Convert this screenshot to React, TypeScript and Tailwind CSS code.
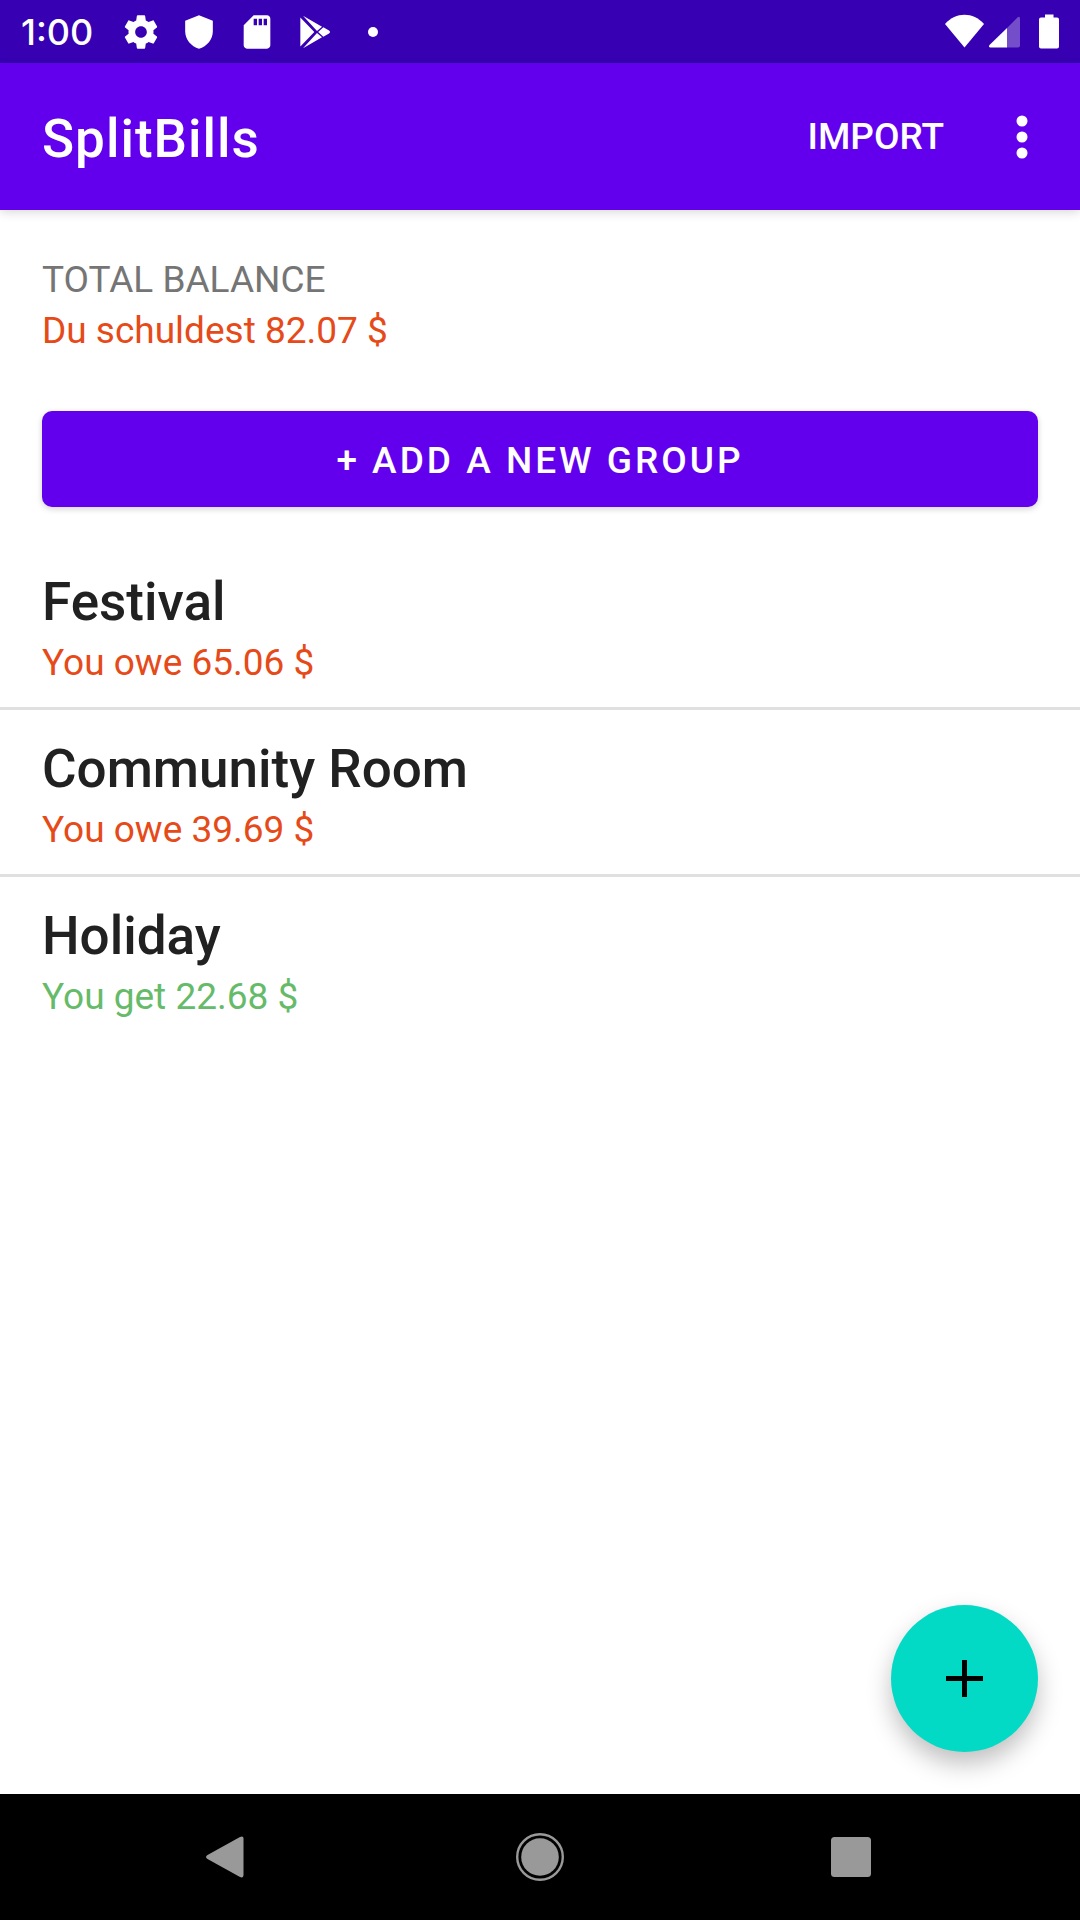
import type { ReactNode } from "react";

type Group = { name: string; balance: string; owed: boolean };

const groups: Group[] = [
  { name: "Festival", balance: "You owe 65.06 $", owed: true },
  { name: "Community Room", balance: "You owe 39.69 $", owed: true },
  { name: "Holiday", balance: "You get 22.68 $", owed: false },
];

function StatusIcon({ children }: { children: ReactNode }) {
  return (
    <svg viewBox="0 0 24 24" className="size-10 fill-white" aria-hidden="true">
      {children}
    </svg>
  );
}

function StatusBar() {
  return (
    <div className="flex h-[63px] items-center justify-between bg-[#3700b3] pr-[15px] pl-[21px]">
      <div className="flex items-center gap-[18px] text-white">
        <span className="mr-2.5 font-['Inter',sans-serif] text-[36px] leading-10 font-medium">1:00</span>
        <StatusIcon>
          <path d="M19.43 12.98c.04-.32.07-.64.07-.98s-.03-.66-.07-.98l2.11-1.65c.19-.15.24-.42.12-.64l-2-3.46c-.12-.22-.39-.3-.61-.22l-2.49 1c-.52-.4-1.08-.73-1.69-.98l-.38-2.65C14.46 2.18 14.25 2 14 2h-4c-.25 0-.46.18-.49.42l-.38 2.65c-.61.25-1.17.59-1.69.98l-2.49-1c-.23-.09-.49 0-.61.22l-2 3.46c-.13.22-.07.49.12.64l2.11 1.65c-.04.32-.07.65-.07.98s.03.66.07.98l-2.11 1.65c-.19.15-.24.42-.12.64l2 3.46c.12.22.39.3.61.22l2.49-1c.52.4 1.08.73 1.69.98l.38 2.65c.03.24.24.42.49.42h4c.25 0 .46-.18.49-.42l.38-2.65c.61-.25 1.17-.59 1.69-.98l2.49 1c.23.09.49 0 .61-.22l2-3.46c.12-.22.07-.49-.12-.64l-2.11-1.65zM12 15.5c-1.93 0-3.5-1.57-3.5-3.5s1.57-3.5 3.5-3.5 3.5 1.57 3.5 3.5-1.57 3.5-3.5 3.5z" />
        </StatusIcon>
        <StatusIcon>
          <path d="M12 2 20.3 5.3V11.5C20.3 16.3 16.8 20.7 12 22C7.2 20.7 3.7 16.3 3.7 11.5V5.3Z" />
        </StatusIcon>
        <StatusIcon>
          <path d="M18 2h-8L4.02 8 4 20c0 1.1.9 2 2 2h12c1.1 0 2-.9 2-2V4c0-1.1-.9-2-2-2zm-6 6h-2V4h2v4zm3 0h-2V4h2v4zm3 0h-2V4h2v4z" />
        </StatusIcon>
        <StatusIcon>
          <path d="M3.2 3.3V20.7L11.6 12ZM4.800 2.300 16.200 8.800 13.200 11.400ZM4.800 21.700 16.200 15.200 13.200 12.600ZM17 9.200 20.400 11.100Q21.600 12 20.400 12.900L17 14.800 13.900 12Z" />
        </StatusIcon>
        <StatusIcon>
          <circle cx="12" cy="12" r="3" />
        </StatusIcon>
      </div>
      <div className="flex items-center fill-white">
        <svg viewBox="0 0 40 36" className="h-9 w-10" aria-hidden="true">
          <path d="M19.5 33.5 0 10C11 -2.300 28 -2.300 39 10Z" />
        </svg>
        <svg viewBox="0 0 40 36" className="h-9 w-10" aria-hidden="true">
          <path d="M35 4.500V31.500Q35 33.500 33 33.500H22V14L32.500 3.500Q35 1.500 35 4.500Z" fillOpacity=".3" />
          <path d="M22 14V33.500H5.500Q3 33 4.500 31Z" />
        </svg>
        <svg viewBox="0 0 40 36" className="h-9 w-10" aria-hidden="true">
          <path d="M20 .5h8.500v3h3.500q2 0 2 2v27q0 2-2 2h-16q-2 0-2-2v-27q0-2 2-2h4z" />
        </svg>
      </div>
    </div>
  );
}

function AppBar() {
  return (
    <header className="flex h-[147px] items-center bg-[#6200ee] pr-[34px] pl-[42px] text-white shadow-[0_2px_10px_rgba(0,0,0,0.16)]">
      <h1 className="flex-1 pt-1 text-[53px] leading-[64px] font-medium tracking-[1px]">SplitBills</h1>
      <button type="button" className="text-[37px] leading-[51px] font-medium">
        IMPORT
      </button>
      <button type="button" aria-label="More options" className="ml-[54px]">
        <svg viewBox="0 0 48 48" className="size-12 fill-white" aria-hidden="true">
          <circle cx="24" cy="8" r="5.500" />
          <circle cx="24" cy="24" r="5.500" />
          <circle cx="24" cy="40" r="5.500" />
        </svg>
      </button>
    </header>
  );
}

function GroupRow({ group }: { group: Group }) {
  return (
    <li className="border-b-3 border-[#e0e0e0] px-[42px] pt-[27px] pb-[17px] last:border-b-0">
      <h2 className="mb-0.5 text-[53px] leading-[64px] font-medium text-[#212121]">{group.name}</h2>
      <p className={group.owed ? "text-[37px] leading-[54px] text-[#e64a19]" : "text-[37px] leading-[54px] text-[#66bb6a]"}>
        {group.balance}
      </p>
    </li>
  );
}

function NavigationBar() {
  return (
    <nav className="grid h-[126px] grid-cols-3 place-items-center bg-black px-[74px]">
      <button type="button" aria-label="Back">
        <svg viewBox="0 0 48 48" className="size-12 fill-[#999999]" aria-hidden="true">
          <path d="M2.500 22 35 4Q38.500 2.500 38.500 5.500V41.500Q38.500 45.500 35 44L2.500 26Q-0.500 24 2.500 22Z" />
        </svg>
      </button>
      <button type="button" aria-label="Home">
        <svg viewBox="0 0 48 48" className="size-12" aria-hidden="true">
          <circle cx="24" cy="24" r="22.800" fill="none" stroke="#999999" strokeWidth="2.400" />
          <circle cx="24" cy="24" r="18.800" fill="#999999" />
        </svg>
      </button>
      <button type="button" aria-label="Recent apps">
        <svg viewBox="0 0 48 48" className="size-12 fill-[#999999]" aria-hidden="true">
          <rect x="4" y="4" width="40" height="40" rx="3.500" />
        </svg>
      </button>
    </nav>
  );
}

export default function App() {
  return (
    <div className="flex min-h-screen flex-col bg-white font-['Roboto',sans-serif]">
      <StatusBar />
      <AppBar />
      <main className="relative flex-1">
        <section className="px-[42px] pt-[44px] text-[37px] leading-[51px]">
          <h2 className="text-[#757575]">TOTAL BALANCE</h2>
          <p className="text-[#e64a19]">Du schuldest 82.07 $</p>
          <button
            type="button"
            className="mt-[55px] h-24 w-full rounded-[10px] bg-[#6200ee] pt-0.5 font-medium tracking-[3px] text-white shadow-[0_2px_6px_rgba(0,0,0,0.18)]"
          >
            + ADD A NEW GROUP
          </button>
        </section>
        <ul className="mt-9">
          {groups.map((group) => (
            <GroupRow key={group.name} group={group} />
          ))}
        </ul>
        <button
          type="button"
          aria-label="Add expense"
          className="absolute right-[42px] bottom-[42px] flex size-[147px] items-center justify-center rounded-full bg-[#03dac5] shadow-[0_12px_24px_rgba(0,0,0,0.25)]"
        >
          <svg viewBox="0 0 63 63" className="size-[63px]" aria-hidden="true">
            <path d="M13 29h16V13h5v16h16v5H34v16h-5V34H13z" />
          </svg>
        </button>
      </main>
      <NavigationBar />
    </div>
  );
}
